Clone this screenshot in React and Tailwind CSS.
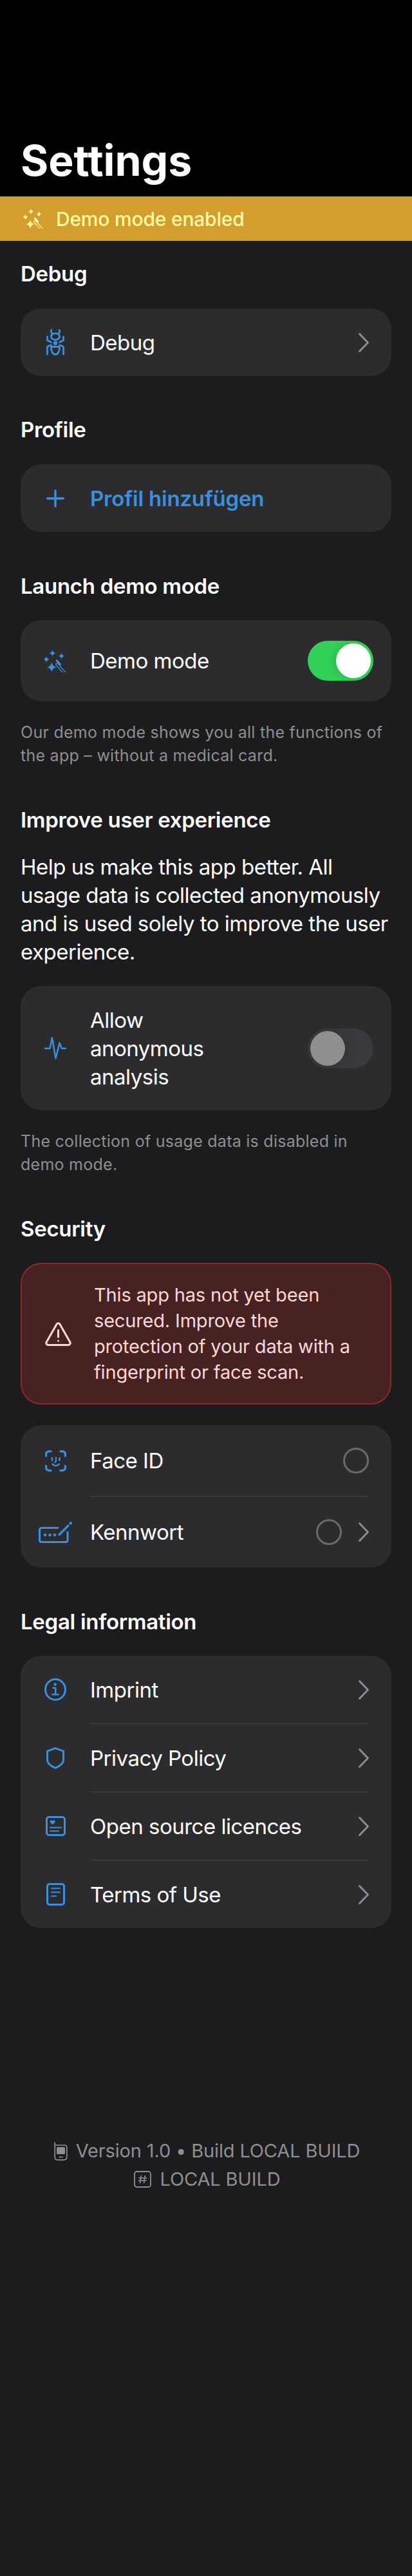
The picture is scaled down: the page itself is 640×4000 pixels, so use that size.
function star(x, y, r) {
  const k = r * 0.16
  return `M${x} ${y - r}Q${x + k} ${y - k} ${x + r} ${y}Q${x + k} ${y + k} ${x} ${y + r}Q${x - k} ${y + k} ${x - r} ${y}Q${x - k} ${y - k} ${x} ${y - r}Z`
}

function WandIcon({ className }) {
  return (
    <svg viewBox="0 0 34 31" className={className} fill="none" stroke="currentColor">
      <path d={star(13, 4.5, 4.5)} fill="currentColor" stroke="none" />
      <path d={star(25.5, 8.5, 4.3)} fill="currentColor" stroke="none" />
      <path d={star(4.5, 13, 4.5)} fill="currentColor" stroke="none" />
      <path d={star(12, 24, 6.8)} fill="currentColor" stroke="none" />
      <path d="M19 15 L23.5 20" strokeWidth="3" strokeLinecap="round" />
      <rect x="17.5" y="19.4" width="20" height="3.2" rx="1.6" transform="rotate(48 20 21)" strokeWidth="1.2" />
    </svg>
  )
}

function BugIcon() {
  return (
    <svg viewBox="0 0 28 41" className="h-[41px] w-[28px]" fill="none" stroke="currentColor" strokeWidth="2.8" strokeLinecap="round" strokeLinejoin="round">
      <path d="M7.7 1.5C6.8 4 7.5 5.5 9 7M20.3 1.5C21.2 4 20.5 5.5 19 7" />
      <ellipse cx="14" cy="11.7" rx="6.7" ry="5" />
      <circle cx="14" cy="21.7" r="3.2" fill="currentColor" stroke="none" />
      <path d="M7.5 27.5H20.5C21 34 18 39.5 14 39.5C10 39.5 7 34 7.5 27.5Z" />
      <path d="M1.5 12V17.5L7.5 20.5M26.5 12V17.5L20.5 20.5" />
      <path d="M7.5 25L3 26.3C1.8 26.7 1.4 27.5 1.4 29V39M20.5 25L25 26.3C26.2 26.7 26.6 27.5 26.6 29V39" />
    </svg>
  )
}

function PlusIcon() {
  return (
    <svg viewBox="0 0 28 28" className="h-[28px] w-[28px]" fill="none" stroke="currentColor" strokeWidth="3.4" strokeLinecap="round">
      <path d="M14 1.7V26.3M1.7 14H26.3" />
    </svg>
  )
}

function PulseIcon() {
  return (
    <svg viewBox="0 0 34 35" className="h-[35px] w-[34px]" fill="none" stroke="currentColor" strokeWidth="2.5" strokeLinecap="round" strokeLinejoin="round">
      <path d="M1 18H8.5L12 1.5L17.5 33.5L23.5 9.5L27 18H33" />
    </svg>
  )
}

function WarningIcon() {
  return (
    <svg viewBox="0 0 41 37" className="h-[37px] w-[41px]" fill="none" stroke="currentColor" strokeWidth="3" strokeLinecap="round" strokeLinejoin="round">
      <path d="M18 3.2C19 1.4 22 1.4 23 3.2L38.8 31C39.8 33 38.6 35.5 36 35.5H5C2.4 35.5 1.2 33 2.2 31Z" />
      <path d="M20.5 12.5V23" />
      <circle cx="20.5" cy="29" r="1.5" fill="currentColor" stroke="none" />
    </svg>
  )
}

function FaceIcon() {
  return (
    <svg viewBox="0 0 33 33" className="h-[33px] w-[33px]" fill="none" stroke="currentColor" strokeWidth="3.2" strokeLinecap="round" strokeLinejoin="round">
      <path d="M1.6 9V6.5C1.6 3.5 3.5 1.6 6.5 1.6H9M24 1.6H26.5C29.5 1.6 31.4 3.5 31.4 6.5V9M31.4 24V26.5C31.4 29.5 29.5 31.4 26.5 31.4H24M9 31.4H6.5C3.5 31.4 1.6 29.5 1.6 26.5V24" />
      <path d="M11 12V15.5M22.5 12V15.5" strokeWidth="2.6" />
      <path d="M17 11V17C17 18 16.2 18.4 15 18.4" strokeWidth="2" />
      <path d="M11.5 21.5C14.5 24.8 19 24.8 22 21.5" strokeWidth="2.6" />
    </svg>
  )
}

function PasswordIcon() {
  return (
    <svg viewBox="0 0 52 33" className="h-[33px] w-[52px]" fill="none" stroke="currentColor" strokeWidth="3" strokeLinecap="round" strokeLinejoin="round">
      <path d="M30 9.5H4.5C2.7 9.5 1.5 10.7 1.5 12.5V28.5C1.5 30.3 2.7 31.5 4.5 31.5H42C43.8 31.5 45 30.3 45 28.5V16" />
      <circle cx="10" cy="20.5" r="2.3" fill="currentColor" stroke="none" />
      <circle cx="17.5" cy="20.5" r="2.3" fill="currentColor" stroke="none" />
      <circle cx="25" cy="20.5" r="2.3" fill="currentColor" stroke="none" />
      <path d="M32 20L46 6" strokeWidth="3.4" />
      <circle cx="49.8" cy="2.3" r="2.2" fill="currentColor" stroke="none" />
    </svg>
  )
}

function InfoIcon() {
  return (
    <svg viewBox="0 0 34 35" className="h-[35px] w-[34px]" fill="none" stroke="currentColor" strokeWidth="3" strokeLinecap="round" strokeLinejoin="round">
      <ellipse cx="17" cy="17.5" rx="15.5" ry="16" />
      <circle cx="16.7" cy="9.5" r="2.3" fill="currentColor" stroke="none" />
      <path d="M13.5 15H17.2V25M12.5 25.3H21.5" strokeWidth="2.6" />
    </svg>
  )
}

function ShieldIcon() {
  return (
    <svg viewBox="0 0 28 34" className="h-[34px] w-[28px]" fill="none" stroke="currentColor" strokeWidth="3" strokeLinecap="round" strokeLinejoin="round">
      <path d="M14 1.7L26.5 6.2V20C26.5 25 20.5 29.5 14 32.3C7.5 29.5 1.5 25 1.5 20V6.2Z" />
    </svg>
  )
}

function LicenceIcon() {
  return (
    <svg viewBox="0 0 31 31" className="h-[31px] w-[31px]" fill="none" stroke="currentColor" strokeWidth="3" strokeLinecap="round" strokeLinejoin="round">
      <rect x="1.5" y="1.5" width="28" height="28" rx="3.5" />
      <path d="M10.7 13.2C6.5 10.3 6.3 8.8 6.7 7.6C7.3 6 9.7 6 10.7 7.8C11.7 6 14.1 6 14.7 7.6C15.1 8.8 14.9 10.3 10.7 13.2Z" fill="currentColor" stroke="none" />
      <path d="M7 17.7H24M7 23.3H20" strokeWidth="1.9" />
    </svg>
  )
}

function TermsIcon() {
  return (
    <svg viewBox="0 0 29 35" className="h-[35px] w-[29px]" fill="none" stroke="currentColor" strokeWidth="3" strokeLinecap="round" strokeLinejoin="round">
      <rect x="1.5" y="1.5" width="26" height="32" rx="3.5" />
      <path d="M8 8.3H21M8 14.3H21M8 20.3H15" strokeWidth="2" />
    </svg>
  )
}

function Chevron() {
  return (
    <svg viewBox="0 0 16 30" className="h-[30px] w-[16px] shrink-0 text-[#8E8E93]" fill="none" stroke="currentColor" strokeWidth="2.8" strokeLinecap="round" strokeLinejoin="round">
      <path d="M1.5 1.5L14.5 15L1.5 28.5" />
    </svg>
  )
}

function Radio() {
  return <span className="h-[40px] w-[40px] shrink-0 rounded-full border-[3px] border-[#6A6A6C]" />
}

function Toggle({ on }) {
  if (on) {
    return (
      <span className="flex h-[62px] w-[102px] shrink-0 items-center justify-end rounded-full bg-[#31D158] pr-[4px]">
        <span className="h-[54px] w-[54px] rounded-full bg-white shadow-[-4px_0_12px_rgba(0,0,0,0.12)]" />
      </span>
    )
  }
  return (
    <span className="flex h-[62px] w-[102px] shrink-0 items-center rounded-full bg-[#39393D] pl-[4px]">
      <span className="h-[54px] w-[54px] rounded-full bg-[#8F8F8F] shadow-[4px_0_12px_rgba(0,0,0,0.12)]" />
    </span>
  )
}

function Heading({ children, className }) {
  return <h2 className={`text-[33px] leading-[44px] font-semibold tracking-[-0.3px] text-white ${className}`}>{children}</h2>
}

function Note({ children }) {
  return <p className="mt-[30px] text-[25px] leading-[36px] tracking-[0.26px] text-[#8E8E93]">{children}</p>
}

function Row({ icon, label, labelClass = 'font-normal tracking-[-0.5px] text-white', height, children }) {
  return (
    <div className="flex items-center" style={{ height }}>
      <span className="flex w-[108px] shrink-0 justify-center text-[#3A8FDF]">{icon}</span>
      <span className={`flex-1 text-[33px] leading-[44px] ${labelClass}`}>{label}</span>
      {children}
    </div>
  )
}

function Divider() {
  return <div className="ml-[108px] h-px bg-[#444446]" />
}

function PhoneIcon() {
  return (
    <svg viewBox="0 0 21 29" className="h-[29px] w-[21px]" fill="none" stroke="currentColor" strokeWidth="1.7" strokeLinecap="round" strokeLinejoin="round">
      <path d="M1.2 1V23.5C1.2 26 3 27.8 5.5 27.8H15.5C18 27.8 19.8 26 19.8 23.5V8.5C19.8 6.5 18.5 5 16.5 5H1.2" />
      <rect x="4" y="8" width="13" height="11" rx="1.5" fill="currentColor" stroke="none" />
      <path d="M8 23.5H13" />
    </svg>
  )
}

function HashIcon() {
  return (
    <svg viewBox="0 0 27 26" className="h-[26px] w-[27px]" fill="none" stroke="currentColor" strokeLinecap="round">
      <rect x="1" y="1" width="25" height="24" rx="3.5" strokeWidth="1.8" />
      <path d="M11.3 7.5L9.6 18.5M17.3 7.5L15.6 18.5M8 11H19.5M7.5 15H19" strokeWidth="1.7" />
    </svg>
  )
}

export default function App() {
  return (
    <div className="min-h-[4000px] bg-[#1C1C1E] font-['Inter','Liberation_Sans',sans-serif] text-white">
      <header className="flex h-[305px] items-end bg-black px-[32px] pb-[16px]">
        <h1 className="text-[66px] leading-[80px] font-bold">Settings</h1>
      </header>
      <div className="flex h-[69px] items-center gap-[18px] bg-[#D49E2F] pl-[35px] text-[#FFF9A6]">
        <WandIcon className="h-[31px] w-[34px]" />
        <span className="text-[30px] leading-[40px] font-medium tracking-[-0.2px]">Demo mode enabled</span>
      </div>

      <main className="px-[32px]">
        <Heading className="mt-[29px] mb-[32px]">Debug</Heading>
        <div className="rounded-[32px] bg-[#2C2C2E] pr-[35px]">
          <Row icon={<BugIcon />} label="Debug" height={105}><Chevron /></Row>
        </div>

        <Heading className="mt-[61px] mb-[32px]">Profile</Heading>
        <div className="rounded-[32px] bg-[#2C2C2E] pr-[35px]">
          <Row icon={<PlusIcon />} label="Profil hinzufügen" labelClass="font-semibold tracking-[-0.2px] text-[#3A8FDF]" height={105} />
        </div>

        <Heading className="mt-[62px] mb-[31px]">Launch demo mode</Heading>
        <div className="rounded-[32px] bg-[#2C2C2E] pr-[28px]">
          <Row icon={<WandIcon className="h-[35px] w-[38px]" />} label="Demo mode" height={126}><Toggle on /></Row>
        </div>
        <Note>Our demo mode shows you all the functions of the app – without a medical card.</Note>

        <Heading className="mt-[60px] mb-[29px]">Improve user experience</Heading>
        <p className="text-[33px] leading-[44px] tracking-[-0.5px]">Help us make this app better. All usage data is collected anonymously and is used solely to improve the user experience.</p>
        <div className="mt-[31px] rounded-[32px] bg-[#2C2C2E] pr-[28px]">
          <Row icon={<PulseIcon />} label={<>Allow<br />anonymous<br />analysis</>} height={193}><Toggle /></Row>
        </div>
        <Note>The collection of usage data is disabled in demo mode.</Note>

        <Heading className="mt-[60px] mb-[31px]">Security</Heading>
        <div className="flex h-[220px] items-center rounded-[32px] border-2 border-[#8B2A2A] bg-[#482122] text-[#FAD9D6]">
          <span className="flex w-[112px] shrink-0 justify-center"><WarningIcon /></span>
          <p className="text-[29px] leading-[40px] tracking-[-0.17px]">This app has not yet been<br />secured. Improve the<br />protection of your data with a<br />fingerprint or face scan.</p>
        </div>
        <div className="mt-[32px] rounded-[32px] bg-[#2C2C2E] pr-[35px]">
          <Row icon={<FaceIcon />} label="Face ID" height={110}><Radio /></Row>
          <Divider />
          <Row icon={<PasswordIcon />} label="Kennwort" height={110}>
            <Radio />
            <span className="ml-[26px] flex"><Chevron /></span>
          </Row>
        </div>

        <Heading className="mt-[62px] mb-[31px]">Legal information</Heading>
        <div className="rounded-[32px] bg-[#2C2C2E] pr-[35px]">
          <Row icon={<InfoIcon />} label="Imprint" height={105}><Chevron /></Row>
          <Divider />
          <Row icon={<ShieldIcon />} label="Privacy Policy" height={105}><Chevron /></Row>
          <Divider />
          <Row icon={<LicenceIcon />} label="Open source licences" height={105}><Chevron /></Row>
          <Divider />
          <Row icon={<TermsIcon />} label="Terms of Use" height={105}><Chevron /></Row>
        </div>
      </main>

      <footer className="mt-[324px] flex flex-col items-center pl-[3px] text-[29px] leading-[44px] tracking-[-0.15px] text-[#8E8E93]">
        <div className="flex items-center gap-[13px]"><PhoneIcon /><span>Version 1.0 • Build LOCAL BUILD</span></div>
        <div className="flex items-center gap-[14px]"><HashIcon /><span>LOCAL BUILD</span></div>
      </footer>
    </div>
  )
}
